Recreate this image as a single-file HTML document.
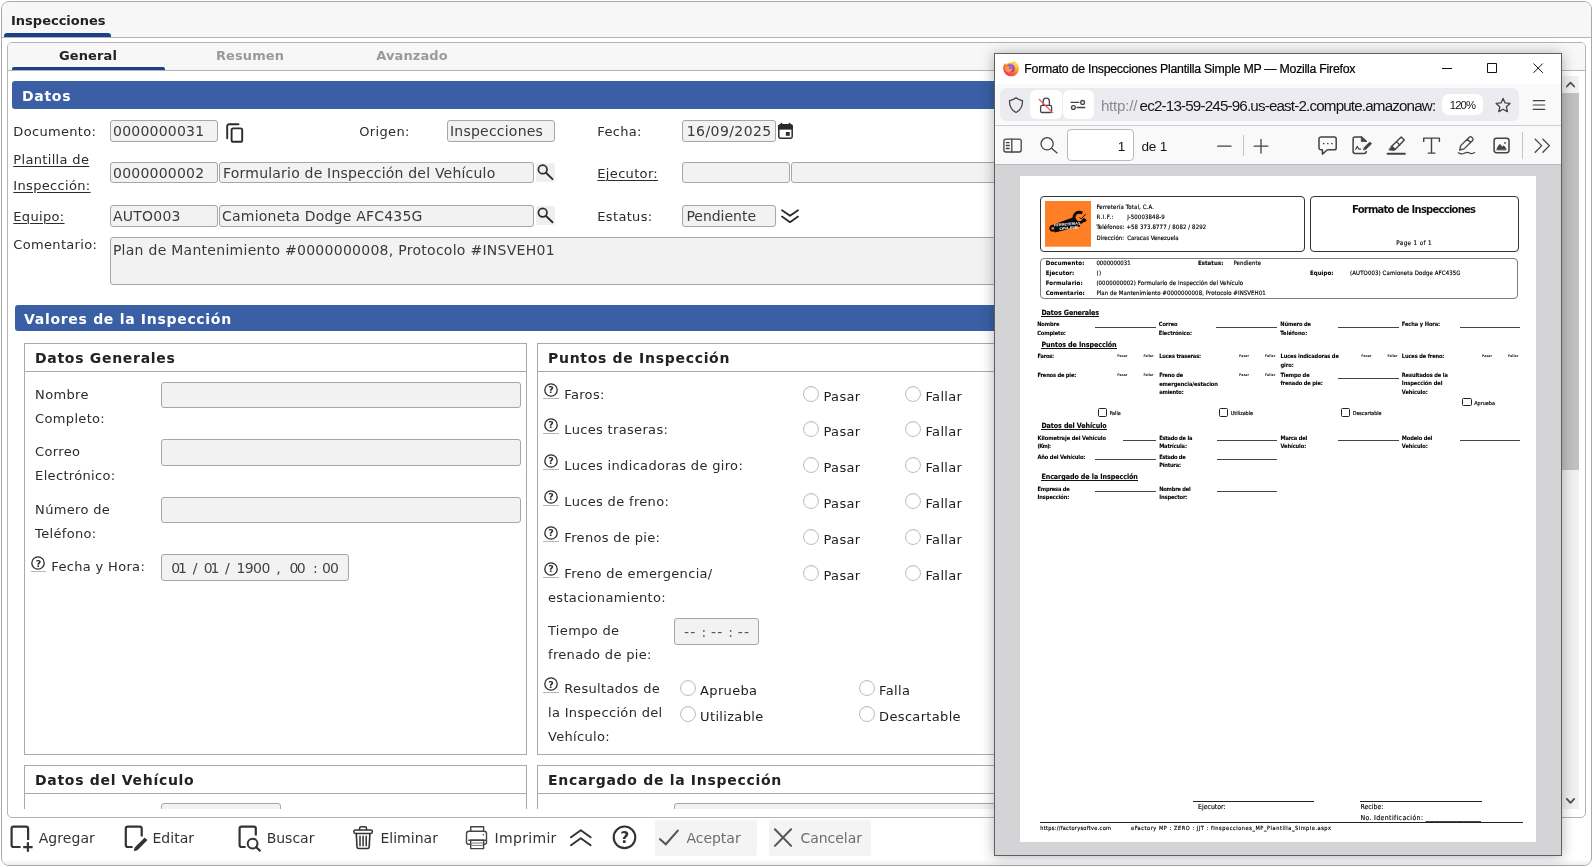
<!DOCTYPE html>
<html lang="es"><head><meta charset="utf-8"><title>Inspecciones</title>
<style>
html,body{margin:0;padding:0;}
body{width:1593px;height:867px;position:relative;overflow:hidden;background:#fff;font-family:"DejaVu Sans","Liberation Sans",sans-serif;color:#2b2b2b;}
.t{position:absolute;white-space:nowrap;line-height:1;}
.u{text-decoration:underline;text-decoration-thickness:1px;text-underline-offset:2px;}
.inp{position:absolute;background:#f2f2f2;border:1px solid #a6a6a6;border-radius:3px;}
.abs{position:absolute;}
svg{position:absolute;overflow:visible;}
.radio{position:absolute;width:14px;height:14px;border:1px solid #bdbdc6;border-radius:50%;background:#fff;box-shadow:inset 0 1px 1px rgba(0,0,0,.06);}
#root{position:absolute;left:0;top:0;width:1593px;height:867px;overflow:hidden;will-change:transform;background:#fff;}

</style></head>
<body>
<div id="root">
<div class="" style="position:absolute;left:1px;top:1px;width:1589px;height:863px;background:#fff;border:1px solid #a9a9a9;border-radius:8px;overflow:hidden;"><div style="position:absolute;left:0;top:0;width:100%;height:35px;background:#f7f7f7;border-bottom:1px solid #b4b4b4"></div><div style="position:absolute;left:0;bottom:0;width:100%;height:5px;background:linear-gradient(#fdfdfe,#e9eef3)"></div></div>
<div class="t " style="top:14px;font-size:13px;left:11.00px;font-weight:bold;color:#222;">Inspecciones</div>
<div class="" style="position:absolute;left:4px;top:33px;width:107px;height:4px;background:#1c4089;border-radius:3px 3px 0 0;"></div>
<div class="" style="position:absolute;left:7px;top:42px;width:1577px;height:774px;border:1px solid #b4b4b4;border-radius:5px;background:#fff;overflow:hidden;"><div style="position:absolute;left:0;top:0;width:100%;height:27px;background:#f7f7f7;border-bottom:1px solid #b4b4b4"></div></div>
<div class="t " style="top:49px;font-size:13px;left:-212px;width:600px;text-align:center;font-weight:bold;color:#222;letter-spacing:0.1px;">General</div>
<div class="" style="position:absolute;left:12px;top:67px;width:153px;height:3px;background:#1c4089;border-radius:2px 2px 0 0;"></div>
<div class="t " style="top:49px;font-size:13px;left:-50px;width:600px;text-align:center;font-weight:bold;color:#9a9a9a;letter-spacing:0.1px;">Resumen</div>
<div class="t " style="top:49px;font-size:13px;left:112px;width:600px;text-align:center;font-weight:bold;color:#9a9a9a;letter-spacing:0.1px;">Avanzado</div>
<div id="scroll" style="position:absolute;left:8px;top:71px;width:1554px;height:738px;overflow:hidden;">
<div style="position:absolute;left:-8px;top:-71px;width:1593px;height:867px;">
<div class="" style="position:absolute;left:12px;top:81px;width:1555px;height:28px;background:#3a5fa5;border-radius:3px;"></div>
<div class="t " style="top:89px;font-size:14px;left:22.00px;font-weight:bold;color:#fff;letter-spacing:0.7px;">Datos</div>
<div class="t " style="top:125px;font-size:13px;left:14.00px;color:#2b2b2b;letter-spacing:0.33px;margin-left:-0.7px;">Documento:</div>
<div class="inp" style="left:110px;top:120px;width:106px;height:19.5px;"></div>
<div class="t " style="top:124px;font-size:14px;left:113.00px;color:#3a3a3a;letter-spacing:0.22px;">0000000031</div>
<div class="t " style="top:125px;font-size:13px;left:360.00px;color:#2b2b2b;letter-spacing:0.33px;margin-left:-0.7px;">Origen:</div>
<div class="inp" style="left:447px;top:120px;width:106px;height:19.5px;"></div>
<div class="t " style="top:124px;font-size:14px;left:450.00px;color:#3a3a3a;letter-spacing:0.22px;">Inspecciones</div>
<div class="t " style="top:125px;font-size:13px;left:598.00px;color:#2b2b2b;letter-spacing:0.33px;margin-left:-0.7px;">Fecha:</div>
<div class="inp" style="left:682px;top:120px;width:92px;height:19.5px;"></div>
<div class="t " style="top:124px;font-size:14px;left:686.80px;color:#3a3a3a;letter-spacing:0.41px;font-family:'DejaVu Sans','Liberation Sans',sans-serif;">16/09/2025</div>
<div class="t u" style="top:153px;font-size:13px;left:14.00px;color:#2b2b2b;letter-spacing:0.33px;margin-left:-0.7px;">Plantilla de</div>
<div class="t u" style="top:179px;font-size:13px;left:14.00px;color:#2b2b2b;letter-spacing:0.33px;margin-left:-0.7px;">Inspección:</div>
<div class="inp" style="left:110px;top:162px;width:106px;height:19px;"></div>
<div class="t " style="top:166px;font-size:14px;left:113.00px;color:#3a3a3a;letter-spacing:0.22px;">0000000002</div>
<div class="inp" style="left:219px;top:162px;width:313px;height:19px;"></div>
<div class="t " style="top:166px;font-size:14px;left:223.10px;color:#3a3a3a;letter-spacing:0.2px;font-family:'DejaVu Sans','Liberation Sans',sans-serif;">Formulario de Inspección del Vehículo</div>
<div class="t u" style="top:167px;font-size:13px;left:598.00px;color:#2b2b2b;letter-spacing:0.33px;margin-left:-0.7px;">Ejecutor:</div>
<div class="inp" style="left:682px;top:162px;width:106px;height:19px;"></div>
<div class="inp" style="left:791px;top:162px;width:528px;height:19px;"></div>
<div class="t u" style="top:210px;font-size:13px;left:14.00px;color:#2b2b2b;letter-spacing:0.33px;margin-left:-0.7px;">Equipo:</div>
<div class="inp" style="left:110px;top:205px;width:106px;height:20px;"></div>
<div class="t " style="top:209px;font-size:14px;left:113.00px;color:#3a3a3a;letter-spacing:0.22px;">AUTO003</div>
<div class="inp" style="left:219px;top:205px;width:313px;height:20px;"></div>
<div class="t " style="top:209px;font-size:14px;left:222.00px;color:#3a3a3a;letter-spacing:0.22px;">Camioneta Dodge AFC435G</div>
<div class="t " style="top:210px;font-size:13px;left:598.00px;color:#2b2b2b;letter-spacing:0.33px;margin-left:-0.7px;">Estatus:</div>
<div class="inp" style="left:682px;top:205px;width:92px;height:20px;"></div>
<div class="t " style="top:209px;font-size:14px;left:686.40px;color:#3a3a3a;letter-spacing:-0.024px;font-family:'DejaVu Sans','Liberation Sans',sans-serif;">Pendiente</div>
<div class="t " style="top:238px;font-size:13px;left:14.00px;color:#2b2b2b;letter-spacing:0.33px;margin-left:-0.7px;">Comentario:</div>
<div class="inp" style="left:110px;top:237px;width:1198px;height:46px;"></div>
<div class="t " style="top:243px;font-size:14px;left:112.90px;color:#3a3a3a;letter-spacing:0.273px;font-family:'DejaVu Sans','Liberation Sans',sans-serif;">Plan de Mantenimiento #0000000008, Protocolo #INSVEH01</div>
<div class="" style="position:absolute;left:15px;top:305px;width:1552px;height:26px;background:#3a5fa5;border-radius:3px;"></div>
<div class="t " style="top:312px;font-size:14px;left:24.00px;font-weight:bold;color:#fff;letter-spacing:0.7px;">Valores de la Inspección</div>
<div class="" style="position:absolute;left:24px;top:343px;width:501px;height:410px;border:1px solid #a9a9a9;background:#fff;"><div style="position:absolute;left:0;top:27px;width:100%;border-top:1px solid #a9a9a9"></div></div>
<div class="t " style="top:351px;font-size:14px;left:35.00px;font-weight:bold;color:#222;letter-spacing:0.7px;">Datos Generales</div>
<div class="t " style="top:388px;font-size:13px;left:35.80px;color:#2b2b2b;letter-spacing:0.33px;margin-left:-0.7px;">Nombre</div>
<div class="t " style="top:412px;font-size:13px;left:35.80px;color:#2b2b2b;letter-spacing:0.33px;margin-left:-0.7px;">Completo:</div>
<div class="inp" style="left:161px;top:382px;width:358px;height:24px;"></div>
<div class="t " style="top:445px;font-size:13px;left:35.80px;color:#2b2b2b;letter-spacing:0.33px;margin-left:-0.7px;">Correo</div>
<div class="t " style="top:469px;font-size:13px;left:35.80px;color:#2b2b2b;letter-spacing:0.33px;margin-left:-0.7px;">Electrónico:</div>
<div class="inp" style="left:161px;top:439px;width:358px;height:25px;"></div>
<div class="t " style="top:503px;font-size:13px;left:35.80px;color:#2b2b2b;letter-spacing:0.33px;margin-left:-0.7px;">Número de</div>
<div class="t " style="top:527px;font-size:13px;left:35.80px;color:#2b2b2b;letter-spacing:0.33px;margin-left:-0.7px;">Teléfono:</div>
<div class="inp" style="left:161px;top:497px;width:358px;height:24px;"></div>
<div class="t " style="top:560px;font-size:13px;left:52.00px;color:#2b2b2b;letter-spacing:0.33px;margin-left:-0.7px;">Fecha y Hora:</div>
<div class="inp" style="left:161px;top:554px;width:186px;height:25px;"></div>
<div class="t " style="top:561px;font-size:14px;left:171.30px;color:#444;letter-spacing:-2.115px;font-family:'DejaVu Sans','Liberation Sans',sans-serif;">01</div>
<div class="t " style="top:561px;font-size:14px;left:192.70px;color:#444;font-family:'DejaVu Sans','Liberation Sans',sans-serif;">/</div>
<div class="t " style="top:561px;font-size:14px;left:203.70px;color:#444;letter-spacing:-2.115px;font-family:'DejaVu Sans','Liberation Sans',sans-serif;">01</div>
<div class="t " style="top:561px;font-size:14px;left:224.90px;color:#444;font-family:'DejaVu Sans','Liberation Sans',sans-serif;">/</div>
<div class="t " style="top:561px;font-size:14px;left:236.60px;color:#444;letter-spacing:-0.643px;font-family:'DejaVu Sans','Liberation Sans',sans-serif;">1900</div>
<div class="t " style="top:561px;font-size:14px;left:276.20px;color:#444;font-family:'DejaVu Sans','Liberation Sans',sans-serif;">,</div>
<div class="t " style="top:561px;font-size:14px;left:289.60px;color:#444;letter-spacing:-1.715px;font-family:'DejaVu Sans','Liberation Sans',sans-serif;">00</div>
<div class="t " style="top:561px;font-size:14px;left:312.90px;color:#444;font-family:'DejaVu Sans','Liberation Sans',sans-serif;">:</div>
<div class="t " style="top:561px;font-size:14px;left:322.00px;color:#444;letter-spacing:-0.915px;font-family:'DejaVu Sans','Liberation Sans',sans-serif;">00</div>
<div class="" style="position:absolute;left:537px;top:343px;width:780px;height:410px;border:1px solid #a9a9a9;background:#fff;"><div style="position:absolute;left:0;top:27px;width:100%;border-top:1px solid #a9a9a9"></div></div>
<div class="t " style="top:351px;font-size:14px;left:548.00px;font-weight:bold;color:#222;letter-spacing:0.7px;">Puntos de Inspección</div>
<div class="t " style="top:388px;font-size:13px;left:565.00px;color:#2b2b2b;letter-spacing:0.33px;margin-left:-0.7px;">Faros:</div>
<div class="radio" style="left:803px;top:386px"></div>
<div class="t " style="top:390px;font-size:13px;left:824.20px;color:#1d1d1d;letter-spacing:0.33px;margin-left:-0.7px;">Pasar</div>
<div class="radio" style="left:905px;top:386px"></div>
<div class="t " style="top:390px;font-size:13px;left:926.20px;color:#1d1d1d;letter-spacing:0.33px;margin-left:-0.7px;">Fallar</div>
<div class="t " style="top:423px;font-size:13px;left:565.00px;color:#2b2b2b;letter-spacing:0.33px;margin-left:-0.7px;">Luces traseras:</div>
<div class="radio" style="left:803px;top:421px"></div>
<div class="t " style="top:425px;font-size:13px;left:824.20px;color:#1d1d1d;letter-spacing:0.33px;margin-left:-0.7px;">Pasar</div>
<div class="radio" style="left:905px;top:421px"></div>
<div class="t " style="top:425px;font-size:13px;left:926.20px;color:#1d1d1d;letter-spacing:0.33px;margin-left:-0.7px;">Fallar</div>
<div class="t " style="top:459px;font-size:13px;left:565.00px;color:#2b2b2b;letter-spacing:0.33px;margin-left:-0.7px;">Luces indicadoras de giro:</div>
<div class="radio" style="left:803px;top:457px"></div>
<div class="t " style="top:461px;font-size:13px;left:824.20px;color:#1d1d1d;letter-spacing:0.33px;margin-left:-0.7px;">Pasar</div>
<div class="radio" style="left:905px;top:457px"></div>
<div class="t " style="top:461px;font-size:13px;left:926.20px;color:#1d1d1d;letter-spacing:0.33px;margin-left:-0.7px;">Fallar</div>
<div class="t " style="top:495px;font-size:13px;left:565.00px;color:#2b2b2b;letter-spacing:0.33px;margin-left:-0.7px;">Luces de freno:</div>
<div class="radio" style="left:803px;top:493px"></div>
<div class="t " style="top:497px;font-size:13px;left:824.20px;color:#1d1d1d;letter-spacing:0.33px;margin-left:-0.7px;">Pasar</div>
<div class="radio" style="left:905px;top:493px"></div>
<div class="t " style="top:497px;font-size:13px;left:926.20px;color:#1d1d1d;letter-spacing:0.33px;margin-left:-0.7px;">Fallar</div>
<div class="t " style="top:531px;font-size:13px;left:565.00px;color:#2b2b2b;letter-spacing:0.33px;margin-left:-0.7px;">Frenos de pie:</div>
<div class="radio" style="left:803px;top:529px"></div>
<div class="t " style="top:533px;font-size:13px;left:824.20px;color:#1d1d1d;letter-spacing:0.33px;margin-left:-0.7px;">Pasar</div>
<div class="radio" style="left:905px;top:529px"></div>
<div class="t " style="top:533px;font-size:13px;left:926.20px;color:#1d1d1d;letter-spacing:0.33px;margin-left:-0.7px;">Fallar</div>
<div class="t " style="top:567px;font-size:13px;left:565.00px;color:#2b2b2b;letter-spacing:0.33px;margin-left:-0.7px;">Freno de emergencia/</div>
<div class="radio" style="left:803px;top:565px"></div>
<div class="t " style="top:569px;font-size:13px;left:824.20px;color:#1d1d1d;letter-spacing:0.33px;margin-left:-0.7px;">Pasar</div>
<div class="radio" style="left:905px;top:565px"></div>
<div class="t " style="top:569px;font-size:13px;left:926.20px;color:#1d1d1d;letter-spacing:0.33px;margin-left:-0.7px;">Fallar</div>
<div class="t " style="top:591px;font-size:13px;left:548.70px;color:#2b2b2b;letter-spacing:0.33px;margin-left:-0.7px;">estacionamiento:</div>
<div class="t " style="top:624px;font-size:13px;left:548.70px;color:#2b2b2b;letter-spacing:0.33px;margin-left:-0.7px;">Tiempo de</div>
<div class="t " style="top:648px;font-size:13px;left:548.70px;color:#2b2b2b;letter-spacing:0.33px;margin-left:-0.7px;">frenado de pie:</div>
<div class="inp" style="left:674px;top:618px;width:83px;height:25px;"></div>
<div class="t " style="top:625px;font-size:14px;left:683.90px;color:#555;letter-spacing:1.185px;font-family:'DejaVu Sans','Liberation Sans',sans-serif;">--</div>
<div class="t " style="top:625px;font-size:14px;left:701.50px;color:#555;font-family:'DejaVu Sans','Liberation Sans',sans-serif;">:</div>
<div class="t " style="top:625px;font-size:14px;left:711.00px;color:#555;letter-spacing:1.185px;font-family:'DejaVu Sans','Liberation Sans',sans-serif;">--</div>
<div class="t " style="top:625px;font-size:14px;left:728.30px;color:#555;font-family:'DejaVu Sans','Liberation Sans',sans-serif;">:</div>
<div class="t " style="top:625px;font-size:14px;left:737.70px;color:#555;letter-spacing:1.285px;font-family:'DejaVu Sans','Liberation Sans',sans-serif;">--</div>
<div class="t " style="top:682px;font-size:13px;left:565.00px;color:#2b2b2b;letter-spacing:0.33px;margin-left:-0.7px;">Resultados de</div>
<div class="t " style="top:706px;font-size:13px;left:548.70px;color:#2b2b2b;letter-spacing:0.33px;margin-left:-0.7px;">la Inspección del</div>
<div class="t " style="top:730px;font-size:13px;left:548.70px;color:#2b2b2b;letter-spacing:0.33px;margin-left:-0.7px;">Vehículo:</div>
<div class="radio" style="left:680px;top:680px"></div>
<div class="t " style="top:684px;font-size:13px;left:700.80px;color:#1d1d1d;letter-spacing:0.33px;margin-left:-0.7px;">Aprueba</div>
<div class="radio" style="left:859px;top:680px"></div>
<div class="t " style="top:684px;font-size:13px;left:879.80px;color:#1d1d1d;letter-spacing:0.33px;margin-left:-0.7px;">Falla</div>
<div class="radio" style="left:680px;top:706px"></div>
<div class="t " style="top:710px;font-size:13px;left:700.80px;color:#1d1d1d;letter-spacing:0.33px;margin-left:-0.7px;">Utilizable</div>
<div class="radio" style="left:859px;top:706px"></div>
<div class="t " style="top:710px;font-size:13px;left:879.80px;color:#1d1d1d;letter-spacing:0.33px;margin-left:-0.7px;">Descartable</div>
<div class="" style="position:absolute;left:24px;top:765px;width:501px;height:80px;border:1px solid #a9a9a9;background:#fff;"><div style="position:absolute;left:0;top:27px;width:100%;border-top:1px solid #a9a9a9"></div></div>
<div class="t " style="top:773px;font-size:14px;left:35.00px;font-weight:bold;color:#222;letter-spacing:0.7px;">Datos del Vehículo</div>
<div class="inp" style="left:161px;top:803px;width:118px;height:24px;"></div>
<div class="" style="position:absolute;left:537px;top:765px;width:780px;height:80px;border:1px solid #a9a9a9;background:#fff;"><div style="position:absolute;left:0;top:27px;width:100%;border-top:1px solid #a9a9a9"></div></div>
<div class="t " style="top:773px;font-size:14px;left:548.00px;font-weight:bold;color:#222;letter-spacing:0.7px;">Encargado de la Inspección</div>
<div class="inp" style="left:674px;top:803px;width:638px;height:24px;"></div>
<svg style="left:224px;top:121px" width="24" height="24" viewBox="224 121 24 24" fill="none" stroke="#2b2b2b" stroke-linecap="round" stroke-linejoin="round" ><path d="M1238.500 124.300h-9.600a1.700 1.700 0 0 0-1.700 1.700v12.300" transform="translate(-1000 0)" stroke-width="1.900"/><rect x="231.600" y="128.400" width="10.600" height="13.400" rx="1.600" stroke-width="1.900"/></svg>
<svg style="left:776px;top:120px" width="20" height="22" viewBox="776 120 20 22" fill="none" stroke="#2b2b2b" stroke-linecap="round" stroke-linejoin="round" ><path d="M781.500 123.500v1.800M789.500 123.500v1.800" stroke-width="1.700"/><path d="M780.400 124.800h10.200a1.600 1.600 0 0 1 1.600 1.600v10.200a1.600 1.600 0 0 1-1.600 1.600h-10.200a1.600 1.600 0 0 1-1.600-1.600v-10.200a1.600 1.600 0 0 1 1.600-1.600z" stroke-width="1.500"/><path d="M778.800 125.500h13.400v3.600h-13.400z" fill="#2b2b2b" stroke-width="1"/><rect x="785.900" y="132" width="3.800" height="3.800" fill="#2b2b2b" stroke="none"/></svg>
<div class="" style="position:absolute;left:536.2px;top:163.2px;width:18.7px;height:18.7px;background:#efefef;border-radius:2px;"></div>
<svg style="left:536px;top:163.2px" width="20" height="20" viewBox="536 163.2 20 20" fill="none" stroke="#2b2b2b" stroke-linecap="round" stroke-linejoin="round" ><circle cx="542.700" cy="169.6" r="4.300" stroke-width="1.700"/><path d="M546 173.0l6.500 6.300" stroke-width="1.900"/></svg>
<div class="" style="position:absolute;left:536.2px;top:206.1px;width:18.7px;height:18.7px;background:#efefef;border-radius:2px;"></div>
<svg style="left:536px;top:206.1px" width="20" height="20" viewBox="536 206.1 20 20" fill="none" stroke="#2b2b2b" stroke-linecap="round" stroke-linejoin="round" ><circle cx="542.700" cy="212.7" r="4.300" stroke-width="1.700"/><path d="M546 216.1l6.500 6.300" stroke-width="1.900"/></svg>
<svg style="left:779px;top:207px" width="22" height="18" viewBox="779 207 22 18" fill="none" stroke="#2b2b2b" stroke-linecap="round" stroke-linejoin="round" ><path d="M782 210.200l8 5.600l8-5.600M782 216.600l8 5.600l8-5.600" stroke-width="1.800"/></svg>
<svg style="left:29.4px;top:554px" width="18" height="18" viewBox="29.4 554 18 18" fill="none" stroke="#2b2b2b" stroke-linecap="round" stroke-linejoin="round" ><circle cx="38.4" cy="563" r="6.200" stroke-width="1.300"/></svg>
<div class="t " style="top:559px;font-size:9.5px;left:-261.6px;width:600px;text-align:center;font-weight:bold;color:#2b2b2b;">?</div>
<div class="" style="position:absolute;left:30.7px;top:571px;width:15.4px;height:1px;background:#b5b5b5;"></div>
<svg style="left:541.9px;top:380.7px" width="18" height="18" viewBox="541.9 380.7 18 18" fill="none" stroke="#2b2b2b" stroke-linecap="round" stroke-linejoin="round" ><circle cx="550.9" cy="389.7" r="6.200" stroke-width="1.300"/></svg>
<div class="t " style="top:385px;font-size:9.5px;left:250.89999999999998px;width:600px;text-align:center;font-weight:bold;color:#2b2b2b;">?</div>
<div class="" style="position:absolute;left:543.1999999999999px;top:397.7px;width:15.4px;height:1px;background:#b5b5b5;"></div>
<svg style="left:541.9px;top:415.7px" width="18" height="18" viewBox="541.9 415.7 18 18" fill="none" stroke="#2b2b2b" stroke-linecap="round" stroke-linejoin="round" ><circle cx="550.9" cy="424.7" r="6.200" stroke-width="1.300"/></svg>
<div class="t " style="top:420px;font-size:9.5px;left:250.89999999999998px;width:600px;text-align:center;font-weight:bold;color:#2b2b2b;">?</div>
<div class="" style="position:absolute;left:543.1999999999999px;top:432.7px;width:15.4px;height:1px;background:#b5b5b5;"></div>
<svg style="left:541.9px;top:451.7px" width="18" height="18" viewBox="541.9 451.7 18 18" fill="none" stroke="#2b2b2b" stroke-linecap="round" stroke-linejoin="round" ><circle cx="550.9" cy="460.7" r="6.200" stroke-width="1.300"/></svg>
<div class="t " style="top:456px;font-size:9.5px;left:250.89999999999998px;width:600px;text-align:center;font-weight:bold;color:#2b2b2b;">?</div>
<div class="" style="position:absolute;left:543.1999999999999px;top:468.7px;width:15.4px;height:1px;background:#b5b5b5;"></div>
<svg style="left:541.9px;top:487.7px" width="18" height="18" viewBox="541.9 487.7 18 18" fill="none" stroke="#2b2b2b" stroke-linecap="round" stroke-linejoin="round" ><circle cx="550.9" cy="496.7" r="6.200" stroke-width="1.300"/></svg>
<div class="t " style="top:492px;font-size:9.5px;left:250.89999999999998px;width:600px;text-align:center;font-weight:bold;color:#2b2b2b;">?</div>
<div class="" style="position:absolute;left:543.1999999999999px;top:504.7px;width:15.4px;height:1px;background:#b5b5b5;"></div>
<svg style="left:541.9px;top:523.7px" width="18" height="18" viewBox="541.9 523.7 18 18" fill="none" stroke="#2b2b2b" stroke-linecap="round" stroke-linejoin="round" ><circle cx="550.9" cy="532.7" r="6.200" stroke-width="1.300"/></svg>
<div class="t " style="top:528px;font-size:9.5px;left:250.89999999999998px;width:600px;text-align:center;font-weight:bold;color:#2b2b2b;">?</div>
<div class="" style="position:absolute;left:543.1999999999999px;top:540.7px;width:15.4px;height:1px;background:#b5b5b5;"></div>
<svg style="left:541.9px;top:559.7px" width="18" height="18" viewBox="541.9 559.7 18 18" fill="none" stroke="#2b2b2b" stroke-linecap="round" stroke-linejoin="round" ><circle cx="550.9" cy="568.7" r="6.200" stroke-width="1.300"/></svg>
<div class="t " style="top:564px;font-size:9.5px;left:250.89999999999998px;width:600px;text-align:center;font-weight:bold;color:#2b2b2b;">?</div>
<div class="" style="position:absolute;left:543.1999999999999px;top:576.7px;width:15.4px;height:1px;background:#b5b5b5;"></div>
<svg style="left:541.9px;top:675px" width="18" height="18" viewBox="541.9 675 18 18" fill="none" stroke="#2b2b2b" stroke-linecap="round" stroke-linejoin="round" ><circle cx="550.9" cy="684" r="6.200" stroke-width="1.300"/></svg>
<div class="t " style="top:680px;font-size:9.5px;left:250.89999999999998px;width:600px;text-align:center;font-weight:bold;color:#2b2b2b;">?</div>
<div class="" style="position:absolute;left:543.1999999999999px;top:692px;width:15.4px;height:1px;background:#b5b5b5;"></div>
</div></div>
<div class="" style="position:absolute;left:1562px;top:76px;width:17px;height:733px;background:#f1f1f1;"></div>
<div class="" style="position:absolute;left:1562px;top:93px;width:17px;height:377px;background:#c1c1c1;"></div>
<svg style="left:1562px;top:76px" width="17" height="17" viewBox="1562 76 17 17" fill="none" stroke="#2b2b2b" stroke-linecap="round" stroke-linejoin="round" ><path d="M1566.800 86.500l3.700-3.900l3.700 3.900" stroke="#505050" stroke-width="1.800"/></svg>
<svg style="left:1562px;top:792px" width="17" height="17" viewBox="1562 792 17 17" fill="none" stroke="#2b2b2b" stroke-linecap="round" stroke-linejoin="round" ><path d="M1566.800 798.900l3.700 3.900l3.700-3.900" stroke="#505050" stroke-width="1.800"/></svg>
<div class="t " style="top:831px;font-size:14px;left:38.70px;color:#333;letter-spacing:0.074px;font-family:'DejaVu Sans','Liberation Sans',sans-serif;">Agregar</div>
<div class="t " style="top:831px;font-size:14px;left:152.50px;color:#333;letter-spacing:0.005px;font-family:'DejaVu Sans','Liberation Sans',sans-serif;">Editar</div>
<div class="t " style="top:831px;font-size:14px;left:266.70px;color:#333;letter-spacing:-0.022px;font-family:'DejaVu Sans','Liberation Sans',sans-serif;">Buscar</div>
<div class="t " style="top:831px;font-size:14px;left:380.40px;color:#333;letter-spacing:0.034px;font-family:'DejaVu Sans','Liberation Sans',sans-serif;">Eliminar</div>
<div class="t " style="top:831px;font-size:14px;left:494.50px;color:#333;letter-spacing:0.328px;font-family:'DejaVu Sans','Liberation Sans',sans-serif;">Imprimir</div>
<div class="" style="position:absolute;left:655px;top:820px;width:102px;height:36px;background:#f4f4f4;border-radius:3px;"></div>
<div class="t " style="top:831px;font-size:14px;left:686.40px;color:#6e6e6e;letter-spacing:-0.015px;font-family:'DejaVu Sans','Liberation Sans',sans-serif;">Aceptar</div>
<div class="" style="position:absolute;left:769px;top:820px;width:102px;height:36px;background:#f4f4f4;border-radius:3px;"></div>
<div class="t " style="top:831px;font-size:14px;left:800.50px;color:#6e6e6e;letter-spacing:-0.039px;font-family:'DejaVu Sans','Liberation Sans',sans-serif;">Cancelar</div>
<svg style="left:8px;top:823px" width="28" height="32" viewBox="8 823 28 32" fill="none" stroke="#2b2b2b" stroke-linecap="round" stroke-linejoin="round" ><path d="M20.600 847h-7a2 2 0 0 1-2-2v-16.400a2 2 0 0 1 2-2h12.500a2 2 0 0 1 2 2v11.400" stroke-width="2.2" stroke="#333" stroke-linecap="butt"/><path d="M23.200 847.100h9.400M27.900 842.300v9.400" stroke="#333" stroke-width="2.200" stroke-linecap="butt"/></svg>
<svg style="left:122px;top:823px" width="28" height="32" viewBox="122 823 28 32" fill="none" stroke="#2b2b2b" stroke-linecap="round" stroke-linejoin="round" ><path d="M132.600 847h-4.800a2 2 0 0 1-2-2v-16.400a2 2 0 0 1 2-2h11.900a2 2 0 0 1 2 2v8" stroke-width="2.2" stroke="#333" stroke-linecap="butt"/><path d="M144.700 838.300l1.900 1.900l-9.400 9.400l-2.700.8l.8-2.700z" fill="#333" stroke="#333" stroke-width="1.200"/></svg>
<svg style="left:236px;top:823px" width="28" height="32" viewBox="236 823 28 32" fill="none" stroke="#2b2b2b" stroke-linecap="round" stroke-linejoin="round" ><path d="M245.600 847h-4a2 2 0 0 1-2-2v-16.400a2 2 0 0 1 2-2h12.200a2 2 0 0 1 2 2v7" stroke-width="2.2" stroke="#333" stroke-linecap="butt"/><circle cx="252.600" cy="843.600" r="4.900" stroke="#333" stroke-width="2"/><path d="M256.300 847.300l3.500 3.300" stroke="#333" stroke-width="2.200"/></svg>
<svg style="left:351px;top:824px" width="26" height="28" viewBox="351 824 26 28" fill="none" stroke="#2b2b2b" stroke-linecap="round" stroke-linejoin="round" ><path d="M359.600 829.800v-1.600a1.500 1.500 0 0 1 1.500-1.500h3.900a1.500 1.500 0 0 1 1.500 1.500v1.600" stroke="#333" stroke-width="1.500"/><rect x="353.800" y="830" width="18.600" height="3.400" rx="1.600" stroke="#333" stroke-width="1.500"/><path d="M356.300 833.600l.7 13.300a1.700 1.700 0 0 0 1.700 1.600h8.800a1.700 1.700 0 0 0 1.700-1.600l.7-13.300" stroke="#333" stroke-width="1.600"/><path d="M360 836.300v9.400M363.100 836.300v9.400M366.200 836.300v9.400" stroke="#333" stroke-width="1.500"/></svg>
<svg style="left:464px;top:824px" width="26" height="28" viewBox="464 824 26 28" fill="none" stroke="#2b2b2b" stroke-linecap="round" stroke-linejoin="round" ><path d="M470.700 831.300v-4.600h12.900v4.600" stroke="#444" stroke-width="1.400"/><path d="M470.700 844.300h-2.200a2 2 0 0 1-2-2v-8.700a2.300 2.300 0 0 1 2.300-2.300h15.400a2.300 2.300 0 0 1 2.300 2.300v8.700a2 2 0 0 1-2 2h-.9" stroke="#444" stroke-width="1.400"/><path d="M470.700 840.200h12.900v8.400h-12.900z" stroke="#444" stroke-width="1.400"/><path d="M468.800 840.200h16.700" stroke="#444" stroke-width="1.400"/><path d="M472 843h10.400M472 845.400h10.400" stroke="#666" stroke-width=".9"/><circle cx="483.400" cy="834.700" r=".8" fill="#444" stroke="none"/></svg>
<svg style="left:568px;top:826px" width="26" height="22" viewBox="568 826 26 22" fill="none" stroke="#2b2b2b" stroke-linecap="round" stroke-linejoin="round" ><path d="M571 837.300l9.800-7l9.800 7M571 845.200l9.800-7l9.800 7" stroke="#333" stroke-width="2"/></svg>
<svg style="left:611px;top:824px" width="27" height="27" viewBox="611 824 27 27" fill="none" stroke="#2b2b2b" stroke-linecap="round" stroke-linejoin="round" ><circle cx="624.500" cy="837.300" r="10.800" stroke="#333" stroke-width="2.100"/></svg>
<div class="t " style="top:831px;font-size:15.5px;left:324.70000000000005px;width:600px;text-align:center;font-weight:bold;color:#333;">?</div>
<svg style="left:657px;top:827px" width="24" height="20" viewBox="657 827 24 20" fill="none" stroke="#2b2b2b" stroke-linecap="round" stroke-linejoin="round" ><path d="M660 839.200l5.800 5l12-13.600" stroke="#555" stroke-width="2.100" stroke-linejoin="miter"/></svg>
<svg style="left:772px;top:826px" width="22" height="22" viewBox="772 826 22 22" fill="none" stroke="#2b2b2b" stroke-linecap="round" stroke-linejoin="round" ><path d="M774.900 829.200l16.200 16.700M791.100 829.200l-16.200 16.700" stroke="#555" stroke-width="2"/></svg>
<div id="ffwin" style="position:absolute;left:994px;top:53px;width:566px;height:801px;border:1px solid #5f5f5f;background:#d4d4d7;box-shadow:0 1px 13px 0 rgba(0,0,0,.30);overflow:hidden;">
<div style="position:absolute;left:-995px;top:-54px;width:1593px;height:867px;">
<div class="" style="position:absolute;left:995px;top:54px;width:566px;height:30px;background:#fff;"></div>
<div class="t " style="top:63px;font-size:12.3px;left:1024.30px;color:#000;letter-spacing:-0.24px;font-family:'Liberation Sans','DejaVu Sans',sans-serif;-webkit-text-stroke:0.2px #000;">Formato de Inspecciones Plantilla Simple MP — Mozilla Firefox</div>
<svg style="left:1436px;top:58px" width="120" height="22" viewBox="1436 58 120 22" fill="none" stroke="#111" stroke-width="1"><path d="M1442 68.5h10M1487.5 63.5h9v9h-9zM1533.5 63.5l9.3 9.3M1542.8 63.5l-9.3 9.3"/></svg>
<div class="" style="position:absolute;left:995px;top:84px;width:566px;height:41px;background:#f9f9fa;"></div>
<div class="" style="position:absolute;left:1000px;top:88px;width:519px;height:33px;background:#ececf0;border-radius:7px;"></div>
<div class="" style="position:absolute;left:1030px;top:90px;width:31.5px;height:29px;background:#fff;border-radius:6px;"></div>
<div class="" style="position:absolute;left:1062.7px;top:90px;width:31.3px;height:29px;background:#fff;border-radius:6px;"></div>
<div class="t " style="top:98px;font-size:15.2px;left:1100.90px;color:#8a8a93;letter-spacing:-0.229px;font-family:'Liberation Sans','DejaVu Sans',sans-serif;">http://</div>
<div class="t " style="top:98px;font-size:15.2px;left:1139.60px;color:#15141a;letter-spacing:-0.838px;font-family:'Liberation Sans','DejaVu Sans',sans-serif;">ec2-13-59-245-96.us-east-2.compute.amazonaw:</div>
<div class="" style="position:absolute;left:1442px;top:94px;width:41px;height:21px;background:#fff;border-radius:7px;"></div>
<div class="t " style="top:100px;font-size:11.3px;left:1449.80px;color:#15141a;letter-spacing:-0.9px;font-family:'Liberation Sans','DejaVu Sans',sans-serif;">120%</div>
<div class="" style="position:absolute;left:995px;top:125px;width:566px;height:1px;background:#cfcfd8;"></div>
<div class="" style="position:absolute;left:995px;top:126px;width:566px;height:38px;background:#f9f9fa;"></div>
<div class="" style="position:absolute;left:995px;top:164px;width:566px;height:1px;background:#b8b8bf;"></div>
<div class="" style="position:absolute;left:1067px;top:129px;width:66.5px;height:31.5px;background:#fff;border:1px solid #b9b9c0;border-radius:4px;box-sizing:border-box;"></div>
<div class="t " style="top:140px;font-size:13.6px;left:1117.80px;color:#15141a;font-family:'Liberation Sans','DejaVu Sans',sans-serif;">1</div>
<div class="t " style="top:140px;font-size:13.6px;left:1141.40px;color:#15141a;letter-spacing:-0.162px;font-family:'Liberation Sans','DejaVu Sans',sans-serif;">de 1</div>
<div class="" style="position:absolute;left:1243px;top:135px;width:1px;height:21px;background:#c4c4cb;"></div>
<div class="" style="position:absolute;left:1522px;top:132px;width:1px;height:27px;background:#c4c4cb;"></div>
<div class="" style="position:absolute;left:1020px;top:176px;width:516px;height:666px;background:#fff;"></div>
<div class="" style="position:absolute;left:1040px;top:196px;width:265px;height:55.5px;border:1.3px solid #333;border-radius:4px;box-sizing:border-box;"></div>
<div class="" style="position:absolute;left:1309.5px;top:196px;width:209px;height:55.5px;border:1.3px solid #333;border-radius:4px;box-sizing:border-box;"></div>
<svg style="left:1045px;top:201px" width="46" height="45.7" viewBox="0 0 46 45.7">
<rect width="46" height="45.7" fill="#ff7f27"/>
<g fill="#0a0a0a">
<path d="M5.800 24.600l24-8.800l5.700 9.400l-25.500 6.400z"/>
<circle cx="7.800" cy="27.300" r="3.400"/>
</g>
<path d="M40.800 20.300l-1.900-1.700A5.200 5.200 0 1 1 35.100 11.300l2.300 .5" fill="none" stroke="#0a0a0a" stroke-width="2.900" stroke-linejoin="round"/>
<circle cx="7.800" cy="27.300" r="1.400" fill="#ff7f27"/>
<path d="M34.500 16.300l1.700 1.700l4.500-5" fill="none" stroke="#0a0a0a" stroke-width="1"/>
<g font-family="'Liberation Sans',sans-serif" font-weight="bold" fill="#fff" transform="rotate(-5 20 25)">
<text x="9.300" y="24.600" font-size="3.600" textLength="26.300" lengthAdjust="spacingAndGlyphs">FERRETERIAS</text>
<text x="14.200" y="28.400" font-size="3.500" textLength="18.800" lengthAdjust="spacingAndGlyphs">ONLINE</text>
</g>
</svg>
<div class="t " style="top:204px;font-size:6.0px;left:1096.40px;color:#000;letter-spacing:0.147px;font-family:'DejaVu Sans Condensed','Liberation Sans',sans-serif;-webkit-text-stroke:0.15px #000;">Ferretería Total, C.A.</div>
<div class="t " style="top:214px;font-size:6.0px;left:1096.40px;color:#000;letter-spacing:0.461px;font-family:'DejaVu Sans Condensed','Liberation Sans',sans-serif;-webkit-text-stroke:0.15px #000;">R.I.F.:</div>
<div class="t " style="top:214px;font-size:6.0px;left:1127.19px;color:#000;letter-spacing:0.121px;font-family:'DejaVu Sans Condensed','Liberation Sans',sans-serif;-webkit-text-stroke:0.15px #000;">J-50003848-9</div>
<div class="t " style="top:224px;font-size:6.0px;left:1096.42px;color:#000;letter-spacing:0.119px;font-family:'DejaVu Sans Condensed','Liberation Sans',sans-serif;-webkit-text-stroke:0.15px #000;">Teléfonos: +58 373.8777 / 8082 / 8292</div>
<div class="t " style="top:235px;font-size:6.0px;left:1096.40px;color:#000;letter-spacing:0.073px;font-family:'DejaVu Sans Condensed','Liberation Sans',sans-serif;-webkit-text-stroke:0.15px #000;">Dirección:</div>
<div class="t " style="top:235px;font-size:6.0px;left:1127.20px;color:#000;letter-spacing:0.019px;font-family:'DejaVu Sans Condensed','Liberation Sans',sans-serif;-webkit-text-stroke:0.15px #000;">Caracas Venezuela</div>
<div class="t " style="top:205px;font-size:10px;left:1352.00px;font-weight:bold;color:#111;letter-spacing:-0.759px;font-family:'DejaVu Sans','Liberation Sans',sans-serif;">Formato de Inspecciones</div>
<div class="t " style="top:240px;font-size:6.3px;left:1396.30px;color:#000;letter-spacing:0.363px;font-family:'DejaVu Sans Condensed','Liberation Sans',sans-serif;-webkit-text-stroke:0.15px #000;">Page 1 of 1</div>
<div class="" style="position:absolute;left:1040px;top:257.5px;width:478px;height:41px;border:1px solid #7d7d7d;border-radius:4px;box-sizing:border-box;"></div>
<div class="t " style="top:260px;font-size:6.0px;left:1045.70px;font-weight:bold;color:#000;letter-spacing:0.21px;font-family:'DejaVu Sans Condensed','Liberation Sans',sans-serif;-webkit-text-stroke:0.08px #000;">Documento:</div>
<div class="t " style="top:260px;font-size:6.0px;left:1096.40px;color:#000;letter-spacing:-0.015px;font-family:'DejaVu Sans Condensed','Liberation Sans',sans-serif;-webkit-text-stroke:0.15px #000;">0000000031</div>
<div class="t " style="top:260px;font-size:6.0px;left:1197.90px;font-weight:bold;color:#000;letter-spacing:0.081px;font-family:'DejaVu Sans Condensed','Liberation Sans',sans-serif;-webkit-text-stroke:0.08px #000;">Estatus:</div>
<div class="t " style="top:260px;font-size:6.0px;left:1233.50px;color:#000;letter-spacing:0.076px;font-family:'DejaVu Sans Condensed','Liberation Sans',sans-serif;-webkit-text-stroke:0.15px #000;">Pendiente</div>
<div class="t " style="top:270px;font-size:6.0px;left:1045.70px;font-weight:bold;color:#000;letter-spacing:0.155px;font-family:'DejaVu Sans Condensed','Liberation Sans',sans-serif;-webkit-text-stroke:0.08px #000;">Ejecutor:</div>
<div class="t " style="top:270px;font-size:6.0px;left:1096.40px;color:#000;letter-spacing:0.385px;font-family:'DejaVu Sans Condensed','Liberation Sans',sans-serif;-webkit-text-stroke:0.15px #000;">()</div>
<div class="t " style="top:270px;font-size:6.0px;left:1309.90px;font-weight:bold;color:#000;letter-spacing:0.103px;font-family:'DejaVu Sans Condensed','Liberation Sans',sans-serif;-webkit-text-stroke:0.08px #000;">Equipo:</div>
<div class="t " style="top:270px;font-size:6.0px;left:1350.10px;color:#000;letter-spacing:0.111px;font-family:'DejaVu Sans Condensed','Liberation Sans',sans-serif;-webkit-text-stroke:0.15px #000;">(AUTO003) Camioneta Dodge AFC435G</div>
<div class="t " style="top:280px;font-size:6.0px;left:1045.70px;font-weight:bold;color:#000;letter-spacing:0.174px;font-family:'DejaVu Sans Condensed','Liberation Sans',sans-serif;-webkit-text-stroke:0.08px #000;">Formulario:</div>
<div class="t " style="top:280px;font-size:6.0px;left:1096.40px;color:#000;letter-spacing:0.089px;font-family:'DejaVu Sans Condensed','Liberation Sans',sans-serif;-webkit-text-stroke:0.15px #000;">(0000000002) Formulario de Inspección del Vehículo</div>
<div class="t " style="top:290px;font-size:6.0px;left:1045.70px;font-weight:bold;color:#000;letter-spacing:0.169px;font-family:'DejaVu Sans Condensed','Liberation Sans',sans-serif;-webkit-text-stroke:0.08px #000;">Comentario:</div>
<div class="t " style="top:290px;font-size:6.0px;left:1096.40px;color:#000;letter-spacing:0.087px;font-family:'DejaVu Sans Condensed','Liberation Sans',sans-serif;-webkit-text-stroke:0.15px #000;">Plan de Mantenimiento #0000000008, Protocolo #INSVEH01</div>
<div class="t " style="top:309px;font-size:7.1px;left:1041.40px;font-weight:bold;color:#000;letter-spacing:-0.109px;font-family:'DejaVu Sans Condensed','Liberation Sans',sans-serif;-webkit-text-stroke:0.1px #000;">Datos Generales</div>
<div class="" style="position:absolute;left:1041.2px;top:315.6px;width:58.0px;height:0.9px;background:#111;"></div>
<div class="t " style="top:322px;font-size:5.7px;left:1037.20px;font-weight:bold;color:#000;letter-spacing:-0.109px;font-family:'DejaVu Sans Condensed','Liberation Sans',sans-serif;-webkit-text-stroke:0.08px #000;">Nombre</div>
<div class="t " style="top:331px;font-size:5.7px;left:1037.20px;font-weight:bold;color:#000;letter-spacing:-0.096px;font-family:'DejaVu Sans Condensed','Liberation Sans',sans-serif;-webkit-text-stroke:0.08px #000;">Completo:</div>
<div class="" style="position:absolute;left:1095px;top:326.6px;width:60.5px;height:1px;background:#444;"></div>
<div class="t " style="top:322px;font-size:5.7px;left:1158.80px;font-weight:bold;color:#000;letter-spacing:-0.11px;font-family:'DejaVu Sans Condensed','Liberation Sans',sans-serif;-webkit-text-stroke:0.08px #000;">Correo</div>
<div class="t " style="top:331px;font-size:5.7px;left:1158.80px;font-weight:bold;color:#000;letter-spacing:-0.1px;font-family:'DejaVu Sans Condensed','Liberation Sans',sans-serif;-webkit-text-stroke:0.08px #000;">Electrónico:</div>
<div class="" style="position:absolute;left:1216.4px;top:326.6px;width:60.5px;height:1px;background:#444;"></div>
<div class="t " style="top:322px;font-size:5.7px;left:1280.30px;font-weight:bold;color:#000;letter-spacing:-0.131px;font-family:'DejaVu Sans Condensed','Liberation Sans',sans-serif;-webkit-text-stroke:0.08px #000;">Número de</div>
<div class="t " style="top:331px;font-size:5.7px;left:1280.30px;font-weight:bold;color:#000;letter-spacing:0.071px;font-family:'DejaVu Sans Condensed','Liberation Sans',sans-serif;-webkit-text-stroke:0.08px #000;">Teléfono:</div>
<div class="" style="position:absolute;left:1338.1px;top:326.6px;width:60.600000000000136px;height:1px;background:#444;"></div>
<div class="t " style="top:322px;font-size:5.7px;left:1401.80px;font-weight:bold;color:#000;letter-spacing:-0.106px;font-family:'DejaVu Sans Condensed','Liberation Sans',sans-serif;-webkit-text-stroke:0.08px #000;">Fecha y Hora:</div>
<div class="" style="position:absolute;left:1459.9px;top:326.6px;width:60.399999999999864px;height:1px;background:#444;"></div>
<div class="t " style="top:341px;font-size:7.1px;left:1041.40px;font-weight:bold;color:#000;letter-spacing:-0.074px;font-family:'DejaVu Sans Condensed','Liberation Sans',sans-serif;-webkit-text-stroke:0.1px #000;">Puntos de Inspección</div>
<div class="" style="position:absolute;left:1041.2px;top:347.6px;width:75.5px;height:0.9px;background:#111;"></div>
<div class="t " style="top:354px;font-size:5.7px;left:1037.50px;font-weight:bold;color:#000;letter-spacing:-0.217px;font-family:'DejaVu Sans Condensed','Liberation Sans',sans-serif;-webkit-text-stroke:0.08px #000;">Faros:</div>
<div class="t " style="top:355px;font-size:3.5px;left:1117.20px;font-weight:bold;color:#222;letter-spacing:0.078px;font-family:'DejaVu Sans Condensed','Liberation Sans',sans-serif;">Pasar</div>
<div class="t " style="top:355px;font-size:3.5px;left:1143.40px;font-weight:bold;color:#222;letter-spacing:0.059px;font-family:'DejaVu Sans Condensed','Liberation Sans',sans-serif;">Fallar</div>
<div class="t " style="top:354px;font-size:5.7px;left:1159.20px;font-weight:bold;color:#000;letter-spacing:-0.168px;font-family:'DejaVu Sans Condensed','Liberation Sans',sans-serif;-webkit-text-stroke:0.08px #000;">Luces traseras:</div>
<div class="t " style="top:355px;font-size:3.5px;left:1238.90px;font-weight:bold;color:#222;letter-spacing:0.078px;font-family:'DejaVu Sans Condensed','Liberation Sans',sans-serif;">Pasar</div>
<div class="t " style="top:355px;font-size:3.5px;left:1265.10px;font-weight:bold;color:#222;letter-spacing:0.059px;font-family:'DejaVu Sans Condensed','Liberation Sans',sans-serif;">Fallar</div>
<div class="t " style="top:354px;font-size:5.7px;left:1280.50px;font-weight:bold;color:#000;letter-spacing:-0.12px;font-family:'DejaVu Sans Condensed','Liberation Sans',sans-serif;-webkit-text-stroke:0.08px #000;">Luces indicadoras de</div>
<div class="t " style="top:363px;font-size:5.7px;left:1280.50px;font-weight:bold;color:#000;letter-spacing:-0.059px;font-family:'DejaVu Sans Condensed','Liberation Sans',sans-serif;-webkit-text-stroke:0.08px #000;">giro:</div>
<div class="t " style="top:355px;font-size:3.5px;left:1361.20px;font-weight:bold;color:#222;letter-spacing:0.078px;font-family:'DejaVu Sans Condensed','Liberation Sans',sans-serif;">Pasar</div>
<div class="t " style="top:355px;font-size:3.5px;left:1387.40px;font-weight:bold;color:#222;letter-spacing:0.059px;font-family:'DejaVu Sans Condensed','Liberation Sans',sans-serif;">Fallar</div>
<div class="t " style="top:354px;font-size:5.7px;left:1401.80px;font-weight:bold;color:#000;letter-spacing:-0.141px;font-family:'DejaVu Sans Condensed','Liberation Sans',sans-serif;-webkit-text-stroke:0.08px #000;">Luces de freno:</div>
<div class="t " style="top:355px;font-size:3.5px;left:1481.90px;font-weight:bold;color:#222;letter-spacing:0.078px;font-family:'DejaVu Sans Condensed','Liberation Sans',sans-serif;">Pasar</div>
<div class="t " style="top:355px;font-size:3.5px;left:1508.10px;font-weight:bold;color:#222;letter-spacing:0.059px;font-family:'DejaVu Sans Condensed','Liberation Sans',sans-serif;">Fallar</div>
<div class="t " style="top:373px;font-size:5.7px;left:1037.50px;font-weight:bold;color:#000;letter-spacing:-0.166px;font-family:'DejaVu Sans Condensed','Liberation Sans',sans-serif;-webkit-text-stroke:0.08px #000;">Frenos de pie:</div>
<div class="t " style="top:374px;font-size:3.5px;left:1117.20px;font-weight:bold;color:#222;letter-spacing:0.078px;font-family:'DejaVu Sans Condensed','Liberation Sans',sans-serif;">Pasar</div>
<div class="t " style="top:374px;font-size:3.5px;left:1143.40px;font-weight:bold;color:#222;letter-spacing:0.059px;font-family:'DejaVu Sans Condensed','Liberation Sans',sans-serif;">Fallar</div>
<div class="t " style="top:373px;font-size:5.7px;left:1159.20px;font-weight:bold;color:#000;letter-spacing:-0.152px;font-family:'DejaVu Sans Condensed','Liberation Sans',sans-serif;-webkit-text-stroke:0.08px #000;">Freno de</div>
<div class="t " style="top:382px;font-size:5.7px;left:1159.20px;font-weight:bold;color:#000;letter-spacing:-0.071px;font-family:'DejaVu Sans Condensed','Liberation Sans',sans-serif;-webkit-text-stroke:0.08px #000;">emergencia/estacion</div>
<div class="t " style="top:390px;font-size:5.7px;left:1159.20px;font-weight:bold;color:#000;letter-spacing:-0.16px;font-family:'DejaVu Sans Condensed','Liberation Sans',sans-serif;-webkit-text-stroke:0.08px #000;">amiento:</div>
<div class="t " style="top:374px;font-size:3.5px;left:1238.90px;font-weight:bold;color:#222;letter-spacing:0.078px;font-family:'DejaVu Sans Condensed','Liberation Sans',sans-serif;">Pasar</div>
<div class="t " style="top:374px;font-size:3.5px;left:1265.10px;font-weight:bold;color:#222;letter-spacing:0.059px;font-family:'DejaVu Sans Condensed','Liberation Sans',sans-serif;">Fallar</div>
<div class="t " style="top:373px;font-size:5.7px;left:1280.50px;font-weight:bold;color:#000;letter-spacing:-0.126px;font-family:'DejaVu Sans Condensed','Liberation Sans',sans-serif;-webkit-text-stroke:0.08px #000;">Tiempo de</div>
<div class="t " style="top:381px;font-size:5.7px;left:1280.50px;font-weight:bold;color:#000;letter-spacing:-0.13px;font-family:'DejaVu Sans Condensed','Liberation Sans',sans-serif;-webkit-text-stroke:0.08px #000;">frenado de pie:</div>
<div class="" style="position:absolute;left:1338.2px;top:377.9px;width:60.5px;height:1px;background:#444;"></div>
<div class="t " style="top:373px;font-size:5.7px;left:1401.80px;font-weight:bold;color:#000;letter-spacing:-0.119px;font-family:'DejaVu Sans Condensed','Liberation Sans',sans-serif;-webkit-text-stroke:0.08px #000;">Resultados de la</div>
<div class="t " style="top:381px;font-size:5.7px;left:1401.80px;font-weight:bold;color:#000;letter-spacing:-0.059px;font-family:'DejaVu Sans Condensed','Liberation Sans',sans-serif;-webkit-text-stroke:0.08px #000;">Inspección del</div>
<div class="t " style="top:390px;font-size:5.7px;left:1401.80px;font-weight:bold;color:#000;letter-spacing:-0.07px;font-family:'DejaVu Sans Condensed','Liberation Sans',sans-serif;-webkit-text-stroke:0.08px #000;">Vehículo:</div>
<div class="" style="position:absolute;left:1462.3px;top:397.5px;width:9.4px;height:8.6px;border:1px solid #222;border-radius:1.5px;box-sizing:border-box;background:#fff;"></div>
<div class="t " style="top:401px;font-size:5.4px;left:1474.20px;color:#000;letter-spacing:0.044px;font-family:'DejaVu Sans Condensed','Liberation Sans',sans-serif;-webkit-text-stroke:0.15px #000;">Aprueba</div>
<div class="" style="position:absolute;left:1097.6px;top:408.2px;width:9.4px;height:8.6px;border:1px solid #222;border-radius:1.5px;box-sizing:border-box;background:#fff;"></div>
<div class="t " style="top:411px;font-size:5.4px;left:1109.70px;color:#000;letter-spacing:0.038px;font-family:'DejaVu Sans Condensed','Liberation Sans',sans-serif;-webkit-text-stroke:0.15px #000;">Falla</div>
<div class="" style="position:absolute;left:1219.1px;top:408.2px;width:9.4px;height:8.6px;border:1px solid #222;border-radius:1.5px;box-sizing:border-box;background:#fff;"></div>
<div class="t " style="top:411px;font-size:5.4px;left:1230.80px;color:#000;letter-spacing:-0.029px;font-family:'DejaVu Sans Condensed','Liberation Sans',sans-serif;-webkit-text-stroke:0.15px #000;">Utilizable</div>
<div class="" style="position:absolute;left:1341px;top:408.2px;width:9.4px;height:8.6px;border:1px solid #222;border-radius:1.5px;box-sizing:border-box;background:#fff;"></div>
<div class="t " style="top:411px;font-size:5.4px;left:1352.70px;color:#000;letter-spacing:-0.031px;font-family:'DejaVu Sans Condensed','Liberation Sans',sans-serif;-webkit-text-stroke:0.15px #000;">Descartable</div>
<div class="t " style="top:422px;font-size:7.1px;left:1041.40px;font-weight:bold;color:#000;letter-spacing:-0.096px;font-family:'DejaVu Sans Condensed','Liberation Sans',sans-serif;-webkit-text-stroke:0.1px #000;">Datos del Vehículo</div>
<div class="" style="position:absolute;left:1041.2px;top:428.9px;width:65.5px;height:0.9px;background:#111;"></div>
<div class="t " style="top:436px;font-size:5.7px;left:1037.50px;font-weight:bold;color:#000;letter-spacing:-0.082px;font-family:'DejaVu Sans Condensed','Liberation Sans',sans-serif;-webkit-text-stroke:0.08px #000;">Kilometraje del Vehículo</div>
<div class="t " style="top:444px;font-size:5.7px;left:1037.50px;font-weight:bold;color:#000;letter-spacing:-0.59px;font-family:'DejaVu Sans Condensed','Liberation Sans',sans-serif;-webkit-text-stroke:0.08px #000;">(Km):</div>
<div class="" style="position:absolute;left:1123.3px;top:439.9px;width:32.299999999999955px;height:1px;background:#444;"></div>
<div class="t " style="top:436px;font-size:5.7px;left:1159.20px;font-weight:bold;color:#000;letter-spacing:-0.209px;font-family:'DejaVu Sans Condensed','Liberation Sans',sans-serif;-webkit-text-stroke:0.08px #000;">Estado de la</div>
<div class="t " style="top:444px;font-size:5.7px;left:1159.20px;font-weight:bold;color:#000;letter-spacing:-0.162px;font-family:'DejaVu Sans Condensed','Liberation Sans',sans-serif;-webkit-text-stroke:0.08px #000;">Matrícula:</div>
<div class="" style="position:absolute;left:1216.7px;top:439.9px;width:60.59999999999991px;height:1px;background:#444;"></div>
<div class="t " style="top:436px;font-size:5.7px;left:1280.50px;font-weight:bold;color:#000;letter-spacing:-0.186px;font-family:'DejaVu Sans Condensed','Liberation Sans',sans-serif;-webkit-text-stroke:0.08px #000;">Marca del</div>
<div class="t " style="top:444px;font-size:5.7px;left:1280.50px;font-weight:bold;color:#000;letter-spacing:-0.095px;font-family:'DejaVu Sans Condensed','Liberation Sans',sans-serif;-webkit-text-stroke:0.08px #000;">Vehículo:</div>
<div class="" style="position:absolute;left:1338.2px;top:439.9px;width:60.5px;height:1px;background:#444;"></div>
<div class="t " style="top:436px;font-size:5.7px;left:1401.80px;font-weight:bold;color:#000;letter-spacing:-0.128px;font-family:'DejaVu Sans Condensed','Liberation Sans',sans-serif;-webkit-text-stroke:0.08px #000;">Modelo del</div>
<div class="t " style="top:444px;font-size:5.7px;left:1401.80px;font-weight:bold;color:#000;letter-spacing:-0.07px;font-family:'DejaVu Sans Condensed','Liberation Sans',sans-serif;-webkit-text-stroke:0.08px #000;">Vehículo:</div>
<div class="" style="position:absolute;left:1459.7px;top:439.9px;width:60.5px;height:1px;background:#444;"></div>
<div class="t " style="top:455px;font-size:5.7px;left:1037.50px;font-weight:bold;color:#000;letter-spacing:-0.137px;font-family:'DejaVu Sans Condensed','Liberation Sans',sans-serif;-webkit-text-stroke:0.08px #000;">Año del Vehículo:</div>
<div class="" style="position:absolute;left:1095px;top:458.6px;width:60.59999999999991px;height:1px;background:#444;"></div>
<div class="t " style="top:455px;font-size:5.7px;left:1159.20px;font-weight:bold;color:#000;letter-spacing:-0.25px;font-family:'DejaVu Sans Condensed','Liberation Sans',sans-serif;-webkit-text-stroke:0.08px #000;">Estado de</div>
<div class="t " style="top:463px;font-size:5.7px;left:1159.20px;font-weight:bold;color:#000;letter-spacing:-0.216px;font-family:'DejaVu Sans Condensed','Liberation Sans',sans-serif;-webkit-text-stroke:0.08px #000;">Pintura:</div>
<div class="" style="position:absolute;left:1216.7px;top:458.6px;width:60.59999999999991px;height:1px;background:#444;"></div>
<div class="t " style="top:473px;font-size:7.1px;left:1041.40px;font-weight:bold;color:#000;letter-spacing:-0.072px;font-family:'DejaVu Sans Condensed','Liberation Sans',sans-serif;-webkit-text-stroke:0.1px #000;">Encargado de la Inspección</div>
<div class="" style="position:absolute;left:1041.2px;top:479.7px;width:96.79999999999995px;height:0.9px;background:#111;"></div>
<div class="t " style="top:487px;font-size:5.7px;left:1037.50px;font-weight:bold;color:#000;letter-spacing:-0.186px;font-family:'DejaVu Sans Condensed','Liberation Sans',sans-serif;-webkit-text-stroke:0.08px #000;">Empresa de</div>
<div class="t " style="top:495px;font-size:5.7px;left:1037.50px;font-weight:bold;color:#000;letter-spacing:-0.092px;font-family:'DejaVu Sans Condensed','Liberation Sans',sans-serif;-webkit-text-stroke:0.08px #000;">Inspección:</div>
<div class="" style="position:absolute;left:1095px;top:490.9px;width:60.59999999999991px;height:1px;background:#444;"></div>
<div class="t " style="top:487px;font-size:5.7px;left:1159.20px;font-weight:bold;color:#000;letter-spacing:-0.203px;font-family:'DejaVu Sans Condensed','Liberation Sans',sans-serif;-webkit-text-stroke:0.08px #000;">Nombre del</div>
<div class="t " style="top:495px;font-size:5.7px;left:1159.20px;font-weight:bold;color:#000;letter-spacing:-0.128px;font-family:'DejaVu Sans Condensed','Liberation Sans',sans-serif;-webkit-text-stroke:0.08px #000;">Inspector:</div>
<div class="" style="position:absolute;left:1216.7px;top:490.9px;width:60.59999999999991px;height:1px;background:#444;"></div>
<div class="" style="position:absolute;left:1192.9px;top:800.5px;width:120.9px;height:1.1px;background:#222;"></div>
<div class="" style="position:absolute;left:1360.4px;top:800.5px;width:121.7px;height:1.1px;background:#222;"></div>
<div class="t " style="top:804px;font-size:6.9px;left:1198.00px;color:#000;letter-spacing:0.004px;font-family:'DejaVu Sans Condensed','Liberation Sans',sans-serif;-webkit-text-stroke:0.15px #000;">Ejecutor:</div>
<div class="t " style="top:804px;font-size:6.9px;left:1360.40px;color:#000;letter-spacing:0.046px;font-family:'DejaVu Sans Condensed','Liberation Sans',sans-serif;-webkit-text-stroke:0.15px #000;">Recibe:</div>
<div class="t " style="top:815px;font-size:6.9px;left:1360.40px;color:#000;letter-spacing:0.368px;font-family:'DejaVu Sans Condensed','Liberation Sans',sans-serif;-webkit-text-stroke:0.15px #000;">No. Identificación: ________________</div>
<div class="" style="position:absolute;left:1040.2px;top:822px;width:482.8px;height:1.1px;background:#222;"></div>
<div class="t " style="top:826px;font-size:5.6px;left:1040.20px;color:#000;letter-spacing:0.3px;font-family:'DejaVu Sans Condensed','Liberation Sans',sans-serif;-webkit-text-stroke:0.15px #000;">https://factorysoftve.com</div>
<div class="t " style="top:826px;font-size:5.6px;left:1131.00px;color:#000;letter-spacing:0.548px;font-family:'DejaVu Sans Condensed','Liberation Sans',sans-serif;-webkit-text-stroke:0.15px #000;">eFactory MP : ZERO : JJT : fInspecciones_MP_Plantilla_Simple.aspx</div>
<svg style="left:995px;top:54px" width="566" height="112" viewBox="995 54 566 112" fill="none" stroke="#424247" stroke-width="1.3" stroke-linecap="round" stroke-linejoin="round">
<defs>
<linearGradient id="fxo" x1="0.85" y1="0.05" x2="0.2" y2="0.95"><stop offset="0" stop-color="#fff36a"/><stop offset="0.3" stop-color="#ffbd2f"/><stop offset="0.62" stop-color="#ff6a33"/><stop offset="1" stop-color="#ef2d6f"/></linearGradient>
<radialGradient id="fxp" cx="0.55" cy="0.35" r="0.7"><stop offset="0" stop-color="#b27bff"/><stop offset="0.6" stop-color="#7340e0"/><stop offset="1" stop-color="#4a1fa8"/></radialGradient>
</defs>
<!-- firefox logo -->
<g stroke="none">
<path d="M1014.6 60.2c.3 1.3 1.4 2 2.500 3.300c1.400 1.700 1.900 3.400 1.900 5.100a7.900 7.900 0 1 1-15.800-.3c0-2.300.9-4.300 2.100-5.600c0 .9.300 1.600.8 2.100c1.400-1.900 3.200-2.200 4.900-2.400c1.900-.3 3-1 3.600-2.200z" fill="url(#fxo)"/>
<circle cx="1010.600" cy="68.100" r="3.900" fill="url(#fxp)"/>
<path d="M1005.300 66.800c1.200-.9 2.800-1.100 4.300-.6c-.8.700-.9 1.700-.2 2.400c.8.700 2.200.7 3.500.2c-.4 2.300-2.300 3.800-4.500 3.600c-2.300-.2-3.900-2.300-3.100-5.600z" fill="#ff9a36"/>
</g>
<!-- shield -->
<path d="M1016 97.700c1.900 1.500 4.100 2.500 6.500 2.900c.2 5.500-2.100 9.700-6.500 11.900c-4.400-2.200-6.700-6.400-6.500-11.900c2.400-.4 4.600-1.400 6.500-2.900z"/>
<!-- lock (insecure) -->
<path d="M1043.200 105.300v-4.100a3.100 3.100 0 0 1 6.200 0v4.100"/>
<rect x="1040.600" y="105.300" width="11" height="7.200" rx="1.600"/>
<path d="M1039.300 99.500l13.400 13.100" stroke="#ff4f5e" stroke-width="1.300"/>
<!-- permissions -->
<path d="M1071.100 102.400h7.700M1077.100 107.500h7.700"/>
<circle cx="1082.600" cy="102.400" r="1.900"/><circle cx="1073.400" cy="107.500" r="1.900"/>
<!-- star -->
<path d="M1503.100 98.400l2.050 4.500l4.900.55l-3.650 3.350l1 4.850l-4.300-2.450l-4.300 2.450l1-4.850l-3.650-3.350l4.900-.55z"/>
<!-- hamburger -->
<path d="M1533.200 100.600h11.500M1533.200 105h11.500M1533.200 109.300h11.500" stroke-width="1.200"/>
<!-- sidebar toggle -->
<rect x="1003.900" y="139.100" width="17.300" height="12.900" rx="2"/>
<path d="M1011.800 139.100v12.900M1006.300 142.600h2.900M1006.300 145.500h2.900M1006.300 148.500h2.900"/>
<!-- search -->
<circle cx="1047.100" cy="143.800" r="6.100"/><path d="M1051.500 148.200l5.600 4.700"/>
<!-- minus / plus -->
<path d="M1217.700 146.200h13.300M1254.200 146.200h13.600M1261 139.400v13.600"/>
<!-- comment -->
<path d="M1320.900 137h13.400a1.900 1.900 0 0 1 1.900 1.900v9a1.900 1.900 0 0 1-1.900 1.900h-6.900l-5 4.300v-4.300h-1.500a1.900 1.900 0 0 1-1.900-1.900v-9a1.900 1.900 0 0 1 1.900-1.900z" stroke-width="1.500"/>
<g fill="#424247" stroke="none"><circle cx="1323.700" cy="143.500" r=".85"/><circle cx="1327.800" cy="143.500" r=".85"/><circle cx="1331.900" cy="143.500" r=".85"/></g>
<!-- signature -->
<path d="M1366.200 151.500a1.900 1.900 0 0 1-1.900 1.900h-9.300a1.900 1.900 0 0 1-1.900-1.900v-12.600a1.900 1.900 0 0 1 1.900-1.900h6.600l4.600 4.300" stroke-width="1.500"/>
<path d="M1361.300 137v4.500h4.900z" fill="#424247" stroke-width=".8"/>
<path d="M1355.600 149.400l1.800-3l1.300 2.700h1.900" stroke-width="1.100"/>
<path d="M1363.600 149.600l.9-2.400l5.300-5.100l1.700 1.700l-5.300 5.100z" fill="#424247" stroke-width=".9"/>
<!-- highlight -->
<path d="M1387.600 153.800h17.300" stroke-width="2"/>
<path d="M1401.200 136.900l3.100 3.100l-9.200 9.600l-3.400-3.400z" stroke-width="1.400"/>
<path d="M1396.500 141.700l3.300 3.300" stroke-width="1.200"/>
<path d="M1391.700 146.200l3.400 3.400l-1.200 .8l-4.700-.4z" fill="#424247" stroke-width=".8"/>
<!-- T -->
<path d="M1423.700 141.400v-3.300h15.700v3.300M1431.500 138.100v15M1428.200 153.100h6.700" stroke-width="1.400"/>
<!-- draw pencil -->
<path d="M1469.300 137.200a1.700 1.700 0 0 1 2.400 0l.9.900a1.700 1.700 0 0 1 0 2.400l-8.600 8.400l-4.300 1.100l1-4.400zM1467.300 139.200l3.300 3.300" stroke-width="1.300"/>
<path d="M1458.300 152.700c2.200 1.400 4.300 1.400 6 .5s3.900-1.200 5.300-.3s3.400.7 5.100-.3" stroke-width="1.200"/>
<!-- image -->
<rect x="1494.100" y="138.300" width="14.900" height="14.400" rx="2.400" stroke-width="1.500"/>
<path d="M1496.800 149.700c.3-2.300 1.500-3.900 3.200-5.500l2.200 2.700l1.400-1.100c1.500 1 2.300 2.300 2.500 3.900z" fill="#424247" stroke-width=".6"/>
<circle cx="1505" cy="142.900" r=".9" fill="#424247" stroke="none"/>
<!-- chevrons -->
<path d="M1535.200 139.300l6.500 6.300l-6.500 6.700M1542.900 139.300l6.500 6.300l-6.500 6.700" stroke-width="1.300"/>
</svg>

</div></div>
</div>
</body></html>
